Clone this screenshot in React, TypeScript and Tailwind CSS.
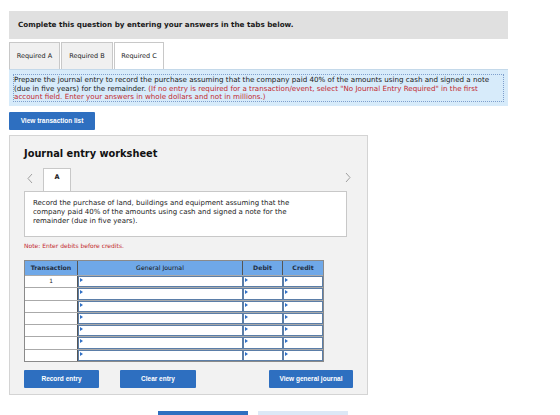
import React from "react";

const verdana = { fontFamily: '"DejaVu Sans", Verdana, sans-serif' };

function Marker() {
  return (
    <span className="absolute left-[1px] top-[1px] w-0 h-0 border-t-[2px] border-b-[2px] border-l-[3px] border-t-transparent border-b-transparent border-l-[#2f6fc4]" />
  );
}

function Chevron({ dir }: { dir: "left" | "right" }) {
  return (
    <svg width="6" height="11" viewBox="0 0 6 11" className="block">
      <path
        d={dir === "left" ? "M5 1 L1 5.5 L5 10" : "M1 1 L5 5.5 L1 10"}
        fill="none"
        stroke="#a0a0a0"
        strokeWidth="1"
      />
    </svg>
  );
}

function BlueButton({ label, className = "" }: { label: string; className?: string }) {
  return (
    <button
      className={`h-[18px] bg-[#2e6fc0] text-white text-[6.5px] font-bold flex items-center justify-center rounded-[1px] ${className}`}
      style={{ fontFamily: '"Liberation Sans", Arial, sans-serif' }}
    >
      {label}
    </button>
  );
}

export default function App() {
  const rows = ["1", "", "", "", "", "", ""];
  const tabs = [
    { label: "Required A", w: "w-[51px]", active: false },
    { label: "Required B", w: "w-[52px]", active: false },
    { label: "Required C", w: "w-[50px]", active: true },
  ];

  return (
    <div className="w-[560px] h-[415px] overflow-hidden bg-white text-[#222]" style={verdana}>
      <div className="pl-[9px] pt-[11px]">
        {/* question header */}
        <div className="w-[499px] h-[28px] bg-[#e0e0e0] flex items-center pl-[9px] text-[7.2px] font-bold text-[#1a1a1a]">
          Complete this question by entering your answers in the tabs below.
        </div>

        {/* tabs */}
        <div className="flex gap-[1px] mt-[3px] h-[27px]">
          {tabs.map((t) => (
            <div
              key={t.label}
              className={`${t.w} h-full flex items-center justify-center pt-[2px] text-[6.5px] border border-b-0 border-[#c8c8c8] ${
                t.active ? "bg-white" : "bg-[#f0f0f0]"
              }`}
            >
              {t.label}
            </div>
          ))}
        </div>

        {/* instructions */}
        <div className="w-[499px] h-[37px] bg-[#d7ebfa] pt-[4px] pl-[4px] pr-[4px] border-t border-[#c4d9ea]">
          <div className="border border-dotted border-[#7f9fcc] h-[28px] pt-[1px] text-[7.15px] leading-[8.6px] text-[#222] whitespace-nowrap">
            Prepare the journal entry to record the purchase assuming that the company paid 40% of the amounts using cash and signed a note
            <br />
            (due in five years) for the remainder.{" "}
            <span className="text-[#c2282e]">
              (If no entry is required for a transaction/event, select "No Journal Entry Required" in the first
              <br />
              account field. Enter your answers in whole dollars and not in millions.)
            </span>
          </div>
        </div>

        <BlueButton label="View transaction list" className="w-[86px] mt-[6px] h-[17px]" />

        {/* worksheet */}
        <div className="w-[359px] h-[260px] mt-[5px] bg-[#f2f2f2] border border-[#d4d4d4] pl-[14px] pt-[12px]">
          <div className="text-[9.8px] font-bold leading-[12px] text-[#111]">Journal entry worksheet</div>

          <div className="flex items-end mt-[8px] h-[23px] w-[327px] relative">
            <span className="ml-[3px] mb-[7px]">
              <Chevron dir="left" />
            </span>
            <div className="ml-[10px] w-[28px] h-[23px] bg-white border border-b-0 border-[#c8c8c8] flex items-start justify-center pt-[4px] text-[6.5px] font-bold">
              A
            </div>
            <span className="absolute right-[0px] top-[4px]">
              <Chevron dir="right" />
            </span>
          </div>

          <div className="w-[323px] h-[46px] bg-white border border-[#c8c8c8] px-[8px] pt-[7px] text-[7px] leading-[9px] text-[#222] whitespace-nowrap">
            Record the purchase of land, buildings and equipment assuming that the
            <br />
            company paid 40% of the amounts using cash and signed a note for the
            <br />
            remainder (due in five years).
          </div>

          <div className="mt-[5px] text-[6px] text-[#c2282e] leading-[7px]">Note: Enter debits before credits.</div>

          {/* journal table */}
          <div className="mt-[11px] w-[300px] border border-[#8a8a8a] text-[6.2px]">
            <div className="flex h-[14px] bg-[#6fa8e8] text-[#1f2f44] font-bold">
              <div className="w-[53px] flex items-center justify-center border-r border-[#555]">Transaction</div>
              <div className="w-[165px] flex items-center justify-center border-r border-[#555] font-normal text-[#111]">General Journal</div>
              <div className="w-[40px] flex items-center justify-center border-r border-[#555]">Debit</div>
              <div className="flex-1 flex items-center justify-center">Credit</div>
            </div>
            {rows.map((r, i) => (
              <div key={i} className="flex h-[12.3px] border-t border-[#aaa]">
                <div className="w-[53px] bg-white flex items-center justify-center border-r border-[#555] text-[5.8px]">{r}</div>
                <div className="w-[165px] relative bg-white border-[1.5px] border-[#5b7ea8]">
                  <Marker />
                </div>
                <div className="w-[40px] relative bg-white border-[1.5px] border-[#5b7ea8]">
                  <Marker />
                </div>
                <div className="flex-1 relative bg-white border-[1.5px] border-[#5b7ea8]">
                  <Marker />
                </div>
              </div>
            ))}
          </div>

          <div className="flex mt-[8px] w-[329px]">
            <BlueButton label="Record entry" className="w-[75px]" />
            <BlueButton label="Clear entry" className="w-[76px] ml-[21px]" />
            <BlueButton label="View general journal" className="w-[84px] ml-auto" />
          </div>
        </div>

        {/* footer nav */}
        <div className="flex mt-[16px] ml-[149px] gap-[10px]">
          <div className="w-[90px] h-[10px] bg-[#2e6fc0]" />
          <div className="w-[90px] h-[10px] bg-[#dce8f6]" />
        </div>
      </div>
    </div>
  );
}
